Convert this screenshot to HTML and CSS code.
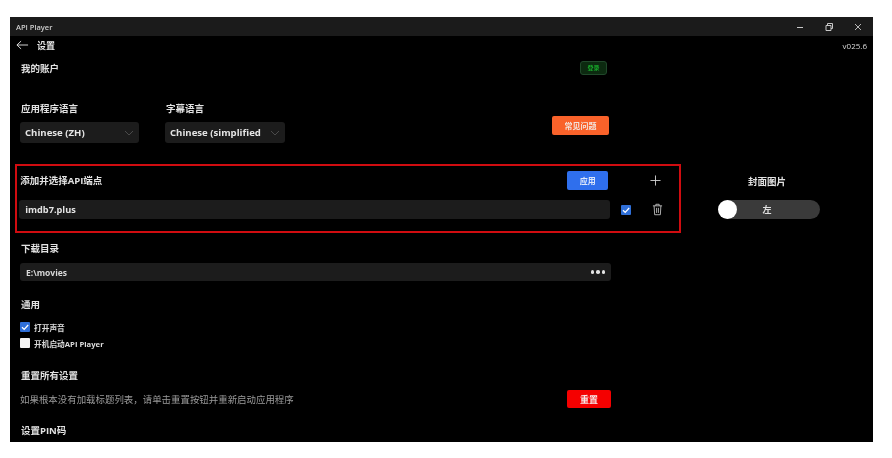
FILE: index.html
```html
<!DOCTYPE html>
<html lang="zh">
<head>
<meta charset="utf-8">
<title>API Player</title>
<link rel="stylesheet" href="styles.css">
</head>
<body>
<div class="window">
  <div class="titlebar">
    <span class="app-name">API Player</span>
    <div class="win-controls">
      <svg class="win-icon" viewBox="0 0 10 10"><path d="M2 5.500h6" stroke="#c8c8c8" stroke-width="1" fill="none"/></svg>
      <svg class="win-icon" viewBox="0 0 10 10"><path d="M2 3.500h5v5h-5zM3.500 3.500v-2h5v5h-1.500" stroke="#c8c8c8" stroke-width="1" fill="none"/></svg>
      <svg class="win-icon" viewBox="0 0 10 10"><path d="M2 2l6 6M8 2l-6 6" stroke="#c8c8c8" stroke-width="0.9" fill="none"/></svg>
    </div>
  </div>
  <div class="header">
    <div class="header-left">
      <svg class="back" viewBox="0 0 14 10"><path d="M13 5H1M5.500 .8L1 5l4.500 4.200" stroke="#e0e0e0" stroke-width="1" fill="none"/></svg>
      <span class="page-title">设置</span>
    </div>
    <span class="version">v025.6</span>
  </div>
  <div class="row-account">
    <span class="label">我的账户</span>
    <button class="btn btn-login">登录</button>
  </div>
  <div class="row-lang">
    <div class="field">
      <span class="label">应用程序语言</span>
      <div class="select select-app"><span>Chinese (ZH)</span><svg class="chev" viewBox="0 0 10 6"><path d="M1 1l4 4 4-4" stroke="#4a4a4a" fill="none"/></svg></div>
    </div>
    <div class="field">
      <span class="label">字幕语言</span>
      <div class="select select-sub"><span>Chinese (simplified</span><svg class="chev" viewBox="0 0 10 6"><path d="M1 1l4 4 4-4" stroke="#4a4a4a" fill="none"/></svg></div>
    </div>
    <button class="btn btn-feedback">常见问题</button>
  </div>
  <div class="row-api">
    <div class="api-box">
      <div class="api-top">
        <span class="label">添加并选择API端点</span>
        <button class="btn btn-apply">应用</button>
        <svg class="plus" viewBox="0 0 12 12"><path d="M6 .5v11M.5 6h11" stroke="#d0d0d0" stroke-width="1" fill="none"/></svg>
      </div>
      <div class="api-bottom">
        <div class="input input-api">imdb7.plus</div>
        <span class="check check-on"><svg viewBox="0 0 10 10"><path d="M2 5.200l2.200 2.200L8.200 3" stroke="#fff" stroke-width="1.300" fill="none"/></svg></span>
        <svg class="trash" viewBox="0 0 12 14"><path d="M1 3h10M4.200 3V1.300h3.600V3M2.300 3l.6 9.700h6.200l.6-9.700M5 5.200v5.500M7 5.200v5.500" stroke="#cfcfcf" stroke-width="0.900" fill="none"/></svg>
      </div>
    </div>
    <div class="cover">
      <span class="label cover-label">封面图片</span>
      <div class="toggle"><span class="knob"></span><span class="toggle-text">左</span></div>
    </div>
  </div>
  <div class="section-download">
    <span class="label">下载目录</span>
    <div class="input input-path"><span>E:\movies</span><span class="dots"><i></i><i></i><i></i></span></div>
  </div>
  <div class="section-general">
    <span class="label">通用</span>
    <div class="check-list">
      <div class="check-row"><span class="check check-on"><svg viewBox="0 0 10 10"><path d="M2 5.200l2.200 2.200L8.200 3" stroke="#fff" stroke-width="1.300" fill="none"/></svg></span><span class="check-label">打开声音</span></div>
      <div class="check-row"><span class="check check-off"></span><span class="check-label">开机启动API Player</span></div>
    </div>
  </div>
  <div class="section-reset">
    <span class="label">重置所有设置</span>
    <div class="reset-row">
      <span class="desc">如果根本没有加载标题列表，请单击重置按钮并重新启动应用程序</span>
      <button class="btn btn-reset">重置</button>
    </div>
  </div>
  <div class="section-pin">
    <span class="label">设置PIN码</span>
  </div>
</div>
</body>
</html>
```

FILE: styles.css
```css
* { box-sizing: border-box; }
html, body { margin: 0; background: #fff; }
body { height: 458px; overflow: hidden; padding: 17px 0 0 10px; }
.window {
  width: 863px;
  height: 425px;
  background: #000;
  color: #e6e6e6;
  overflow: hidden;
  font-family: "Open Sans", "Noto Sans CJK SC", sans-serif;
  font-size: 9.5px;
  font-weight: 700;
  filter: blur(0.4px);
}
.label { display: block; line-height: 12px; color: #e2e2e2; }
.titlebar {
  height: 19px;
  background: #1b1b1b;
  display: flex;
  align-items: center;
  justify-content: space-between;
  padding: 0 6px 0 6px;
}
.app-name { font-size: 7.5px; font-weight: 600; color: #cfcfcf; }
.win-controls { display: flex; gap: 19px; margin-right: 4px; }
.win-icon { width: 10px; height: 10px; display: block; }
.header {
  height: 18px;
  display: flex;
  align-items: center;
  justify-content: space-between;
  padding: 0 6px;
}
.header-left { display: flex; align-items: center; gap: 8px; }
.back { width: 13px; height: 10px; display: block; }
.page-title { font-size: 9px; }
.version { font-size: 8px; font-weight: 400; color: #d8d8d8; }
.row-account {
  height: 26px;
  display: flex;
  align-items: center;
  padding: 4px 0 0 11px;
}
.btn {
  border: 0;
  padding: 0;
  color: #eee;
  font: inherit;
  font-size: 8px;
  line-height: 1;
  border-radius: 2px;
  display: flex;
  align-items: center;
  justify-content: center;
}
.btn-login {
  width: 27px;
  height: 14px;
  margin-left: 521px;
  margin-top: -2px;
  background: #0c2a10;
  border: 1px solid #20482a;
  border-radius: 3px;
  color: #17a82a;
  font-size: 6px;
}
.row-lang {
  height: 84px;
  display: flex;
  align-items: flex-start;
  padding: 23px 0 0 10px;
}
.field { display: flex; flex-direction: column; gap: 7px; margin-right: 26px; }
.field .label { padding-left: 1px; }
.select {
  height: 21px;
  background: #1c1c1c;
  border-radius: 3px;
  display: flex;
  align-items: center;
  justify-content: space-between;
  padding: 0 5px;
  font-size: 9.6px;
  color: #e4e4e4;
}
.select-app { width: 119px; }
.select-sub { width: 120px; }
.chev { width: 10px; height: 6px; display: block; }
.btn-feedback {
  width: 57px;
  height: 19px;
  margin: 13px 0 0 241px;
  background: #f9622a;
  color: #f3e2da;
}
.row-api { display: flex; margin-left: 5px; }
.api-box {
  width: 666px;
  height: 69px;
  border: 2.800px solid #d00c10;
  padding: 5px 0 0 2.200px;
}
.api-top { display: flex; align-items: center; height: 19px; }
.api-top .label { width: 548px; padding-left: 1px; }
.btn-apply {
  width: 41px;
  height: 19px;
  background: #2f6fed;
  color: #dbe6fa;
}
.plus { width: 11px; height: 11px; margin-left: 42px; display: block; }
.api-bottom { display: flex; align-items: center; margin-top: 10px; }
.input {
  background: #1c1c1c;
  border-radius: 3px;
  display: flex;
  align-items: center;
}
.input-api {
  width: 591px;
  height: 19px;
  padding-left: 6px;
  font-size: 9.2px;
  color: #e4e4e4;
}
.check {
  width: 10px;
  height: 10px;
  border-radius: 1px;
  display: block;
  flex: none;
}
.check svg { display: block; width: 10px; height: 10px; }
.check-on { background: #2f6fd8; }
.check-off { background: #f4f4f4; }
.api-bottom .check { margin-left: 11px; }
.trash { width: 11px; height: 13px; margin-left: 21px; display: block; }
.cover { width: 102px; margin-left: 37px; padding-top: 12px; }
.cover-label { text-align: center; height: 12px; padding-right: 4px; }
.toggle {
  height: 19px;
  margin-top: 12px;
  border-radius: 10px;
  background: #3a3a3a;
  display: flex;
  align-items: center;
}
.knob {
  width: 19px;
  height: 19px;
  border-radius: 50%;
  background: #fff;
  flex: none;
}
.toggle-text { flex: 1; text-align: center; padding-right: 23px; color: #e0e0e0; font-size: 9px; }
.section-download { padding: 10px 0 0 10px; }
.section-download .label { padding-left: 1px; height: 14px; }
.input-path {
  width: 591px;
  height: 18px;
  margin-top: 6px;
  padding: 0 6px;
  justify-content: space-between;
  font-size: 8.5px;
  color: #d8d8d8;
}
.dots { display: flex; gap: 2px; }
.dots i { width: 3.500px; height: 3.500px; border-radius: 50%; background: #e4e4e4; display: block; }
.section-general { padding: 18px 0 0 10px; }
.section-general > .label { padding-left: 1px; }
.check-list { margin-top: 11px; display: flex; flex-direction: column; gap: 6px; }
.check-row { display: flex; align-items: center; gap: 4px; height: 10px; }
.check-label { font-size: 7.7px; color: #dcdcdc; }
.section-reset { padding: 22px 0 0 10px; }
.section-reset > .label { padding-left: 1px; }
.reset-row {
  display: flex;
  align-items: center;
  height: 18px;
  margin-top: 8px;
}
.desc { width: 547px; font-size: 9.45px; font-weight: 400; color: #9a9a9a; }
.btn-reset {
  width: 44px;
  height: 18px;
  background: #f50000;
  color: #f6e6e6;
  font-size: 9px;
}
.section-pin { padding: 17px 0 0 11px; }
```
